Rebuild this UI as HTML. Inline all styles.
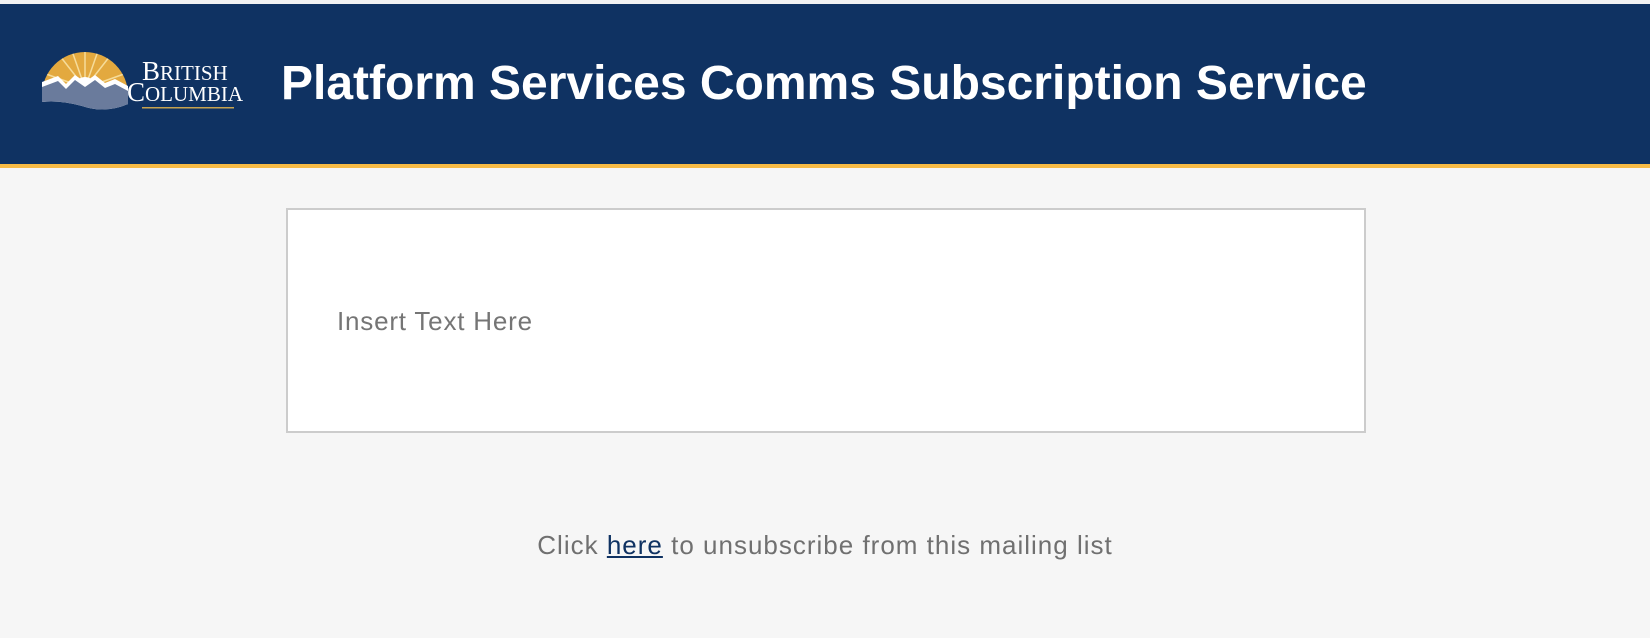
<!DOCTYPE html>
<html><head><meta charset="utf-8"><style>
html,body{margin:0;padding:0;width:1650px;height:638px;overflow:hidden;background:#f6f6f6;font-family:"Liberation Sans",Arial,sans-serif}
.top{height:4px;background:#f2f2f2}
.hdr{position:absolute;left:0;top:4px;width:1650px;height:160px;background:#0f3262;border-bottom:4px solid #f7bb45}
.title{position:absolute;left:281px;top:50px;color:#fff;font-weight:bold;font-size:48px;line-height:60px;white-space:nowrap}
.box{position:absolute;left:286px;top:208px;width:1076px;height:221px;background:#fff;border:2px solid #ccc}
.box span{position:absolute;left:49px;top:96px;font-size:26px;letter-spacing:0.8px;color:#757575;line-height:30px}
.foot{position:absolute;left:0;width:1650px;top:530px;text-align:center;font-size:26px;letter-spacing:1px;color:#707070;line-height:30px}
.foot a{color:#0f3262;text-decoration:underline}
</style></head><body>
<div class="top"></div>
<div class="hdr">
<svg style="position:absolute;left:0;top:0" width="260" height="120" viewBox="0 0 260 120">
 <defs><clipPath id="c"><path d="M42 91 A43 43 0 0 1 128 91 Z"/></clipPath></defs>
 <path d="M42 91 A43 43 0 0 1 128 91 Z" fill="#e3a93f"/>
 <g clip-path="url(#c)" stroke="#f6dc9a" stroke-width="1.5">
  <line x1="85" y1="84" x2="85" y2="45"/><line x1="85" y1="84" x2="60" y2="52"/><line x1="85" y1="84" x2="110" y2="52"/>
  <line x1="85" y1="84" x2="46" y2="70"/><line x1="85" y1="84" x2="124" y2="70"/><line x1="85" y1="84" x2="72" y2="47"/><line x1="85" y1="84" x2="98" y2="47"/>
 </g>
 <circle cx="85" cy="84" r="11" fill="#fff"/>
 <path d="M42 78 L58 72 L66 80 L75 71 L85 78 L95 71 L105 79 L115 75 L128 82 L128 100 Q105 110 82 102 Q60 96 42 98 Z" fill="#fff"/>
 <path d="M42 83 L58 77 L66 85 L75 76 L85 83 L95 76 L105 84 L115 80 L128 87 L128 100 Q105 110 82 102 Q60 96 42 98 Z" fill="#6a7b9c"/>
 <text x="142" y="76" fill="#fff" font-family="Liberation Serif,serif" font-size="27">B<tspan font-size="21">RITISH</tspan></text>
 <text x="127" y="97" fill="#fff" font-family="Liberation Serif,serif" font-size="27">C<tspan font-size="21">OLUMBIA</tspan></text>
 <rect x="142" y="103" width="92" height="1.5" fill="#c6a350"/>
</svg>
<div class="title">Platform Services Comms Subscription Service</div>
</div>
<div class="box"><span>Insert Text Here</span></div>
<div class="foot">Click <a>here</a> to unsubscribe from this mailing list</div>
</body></html>
